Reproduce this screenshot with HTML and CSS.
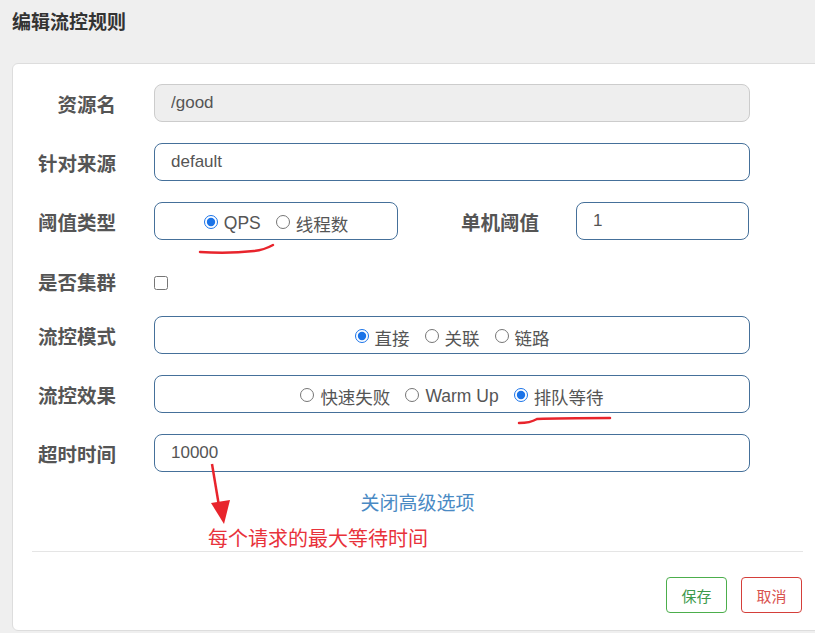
FILE: index.html
```html
<!DOCTYPE html>
<html lang="zh-CN">
<head>
  <meta charset="UTF-8">
  <title>编辑流控规则</title>
  <link rel="stylesheet" href="styles.css">
</head>
<body>
  <h1 class="title">编辑流控规则</h1>
  <div class="panel">
    <form class="rule-form">
      <div class="row">
        <label class="lbl">资源名</label>
        <input class="field field-readonly" type="text" value="/good" readonly>
      </div>
      <div class="row">
        <label class="lbl">针对来源</label>
        <input class="field" type="text" value="default">
      </div>
      <div class="row">
        <label class="lbl">阈值类型</label>
        <div class="field group group-small">
          <label class="opt"><input type="radio" name="grade" checked> QPS</label>
          <label class="opt"><input type="radio" name="grade"> 线程数</label>
        </div>
        <label class="lbl">单机阈值</label>
        <input class="field field-small" type="text" value="1">
      </div>
      <div class="row row-check">
        <label class="lbl">是否集群</label>
        <input class="check" type="checkbox">
      </div>
      <div class="row">
        <label class="lbl">流控模式</label>
        <div class="field group">
          <label class="opt"><input type="radio" name="strategy" checked> 直接</label>
          <label class="opt"><input type="radio" name="strategy"> 关联</label>
          <label class="opt"><input type="radio" name="strategy"> 链路</label>
        </div>
      </div>
      <div class="row">
        <label class="lbl">流控效果</label>
        <div class="field group">
          <label class="opt"><input type="radio" name="behavior"> 快速失败</label>
          <label class="opt"><input type="radio" name="behavior"> Warm Up</label>
          <label class="opt"><input type="radio" name="behavior" checked> 排队等待</label>
        </div>
      </div>
      <div class="row">
        <label class="lbl">超时时间</label>
        <input class="field" type="text" value="10000">
      </div>
      <a class="toggle-link" href="#">关闭高级选项</a>
    </form>
    <div class="footer">
      <button class="btn btn-save" type="button">保存</button>
      <button class="btn btn-cancel" type="button">取消</button>
    </div>
  </div>

  <!-- 截图上的红色标注 -->
  <svg class="marks" width="815" height="633" viewBox="0 0 815 633">
    <path d="M200 252 Q228 254 254 251 Q264 250 273 245" fill="none" stroke="#e8242c" stroke-width="2.5" stroke-linecap="round"/>
    <path d="M519 423 Q530 423 537 419 Q560 418 610 418" fill="none" stroke="#e8242c" stroke-width="2.5" stroke-linecap="round"/>
    <path d="M212 464 L219 506" fill="none" stroke="#e8242c" stroke-width="2.5"/>
    <polygon points="211,503 230,500 224,524" fill="#e8242c"/>
  </svg>
  <div class="note">每个请求的最大等待时间</div>
</body>
</html>
```
FILE: styles.css
```css
body {
  margin: 0;
  background: #efefef;
  font-family: 'Liberation Sans', 'Noto Sans CJK SC', sans-serif;
  color: #555;
  overflow: hidden;
  height: 633px;
  position: relative;
}
.title {
  margin: 0;
  padding: 11px 0 0 12px;
  font-size: 19px;
  line-height: 24px;
  font-weight: bold;
  color: #333;
}
.panel {
  margin: 28px 0 0 12px;
  width: 809px;
  background: #fff;
  border: 1px solid #ddd;
  border-radius: 6px;
}
.rule-form {
  display: flex;
  flex-direction: column;
  gap: 21px;
  padding-top: 20px;
}
.row {
  display: flex;
  align-items: center;
  gap: 38px;
  height: 38px;
}
.row-check {
  margin-top: 1px;
  margin-bottom: -5px;
}
.lbl {
  width: 103px;
  text-align: right;
  font-size: 19.5px;
  font-weight: bold;
  color: #555;
  flex-shrink: 0;
}
.field {
  box-sizing: border-box;
  width: 596px;
  height: 38px;
  border: 1px solid #45709a;
  border-radius: 8px;
  padding: 0 16px;
  font-family: inherit;
  font-size: 17px;
  color: #555;
  background: #fff;
  outline: none;
}
.field-readonly {
  background: #eee;
  border-color: #ccc;
}
.field-small {
  width: 173px;
  margin-left: -1px;
}
.group {
  display: flex;
  align-items: center;
  justify-content: center;
  gap: 15px;
  padding-top: 5px;
}
.group-small {
  width: 244px;
}
.opt {
  display: flex;
  align-items: center;
  gap: 6px;
  font-size: 17.5px;
  color: #555;
}
.opt input {
  margin: 0 0 3px;
  width: 14px;
  height: 14px;
  accent-color: #1a73e8;
}
.check {
  margin: 4px 0 0;
  width: 14px;
  height: 14px;
}
.toggle-link {
  text-align: center;
  font-size: 19px;
  line-height: 22px;
  color: #4a8ac4;
  text-decoration: none;
}
.footer {
  margin: 36px 19px 0;
  border-top: 1px solid #e5e5e5;
  padding: 25px 1px 17px 0;
  display: flex;
  justify-content: flex-end;
  gap: 14px;
}
.btn {
  width: 61px;
  height: 36px;
  background: #fff;
  border-radius: 4px;
  font-family: inherit;
  font-size: 15px;
  cursor: pointer;
}
.btn-save {
  border: 1px solid #4cae4c;
  color: #3d9a4d;
}
.btn-cancel {
  border: 1px solid #d43f3a;
  color: #d9534f;
}
.marks {
  position: absolute;
  left: 0;
  top: 0;
  pointer-events: none;
}
.note {
  position: absolute;
  left: 208px;
  top: 527px;
  font-size: 20px;
  line-height: 24px;
  color: #e8323b;
}
```
